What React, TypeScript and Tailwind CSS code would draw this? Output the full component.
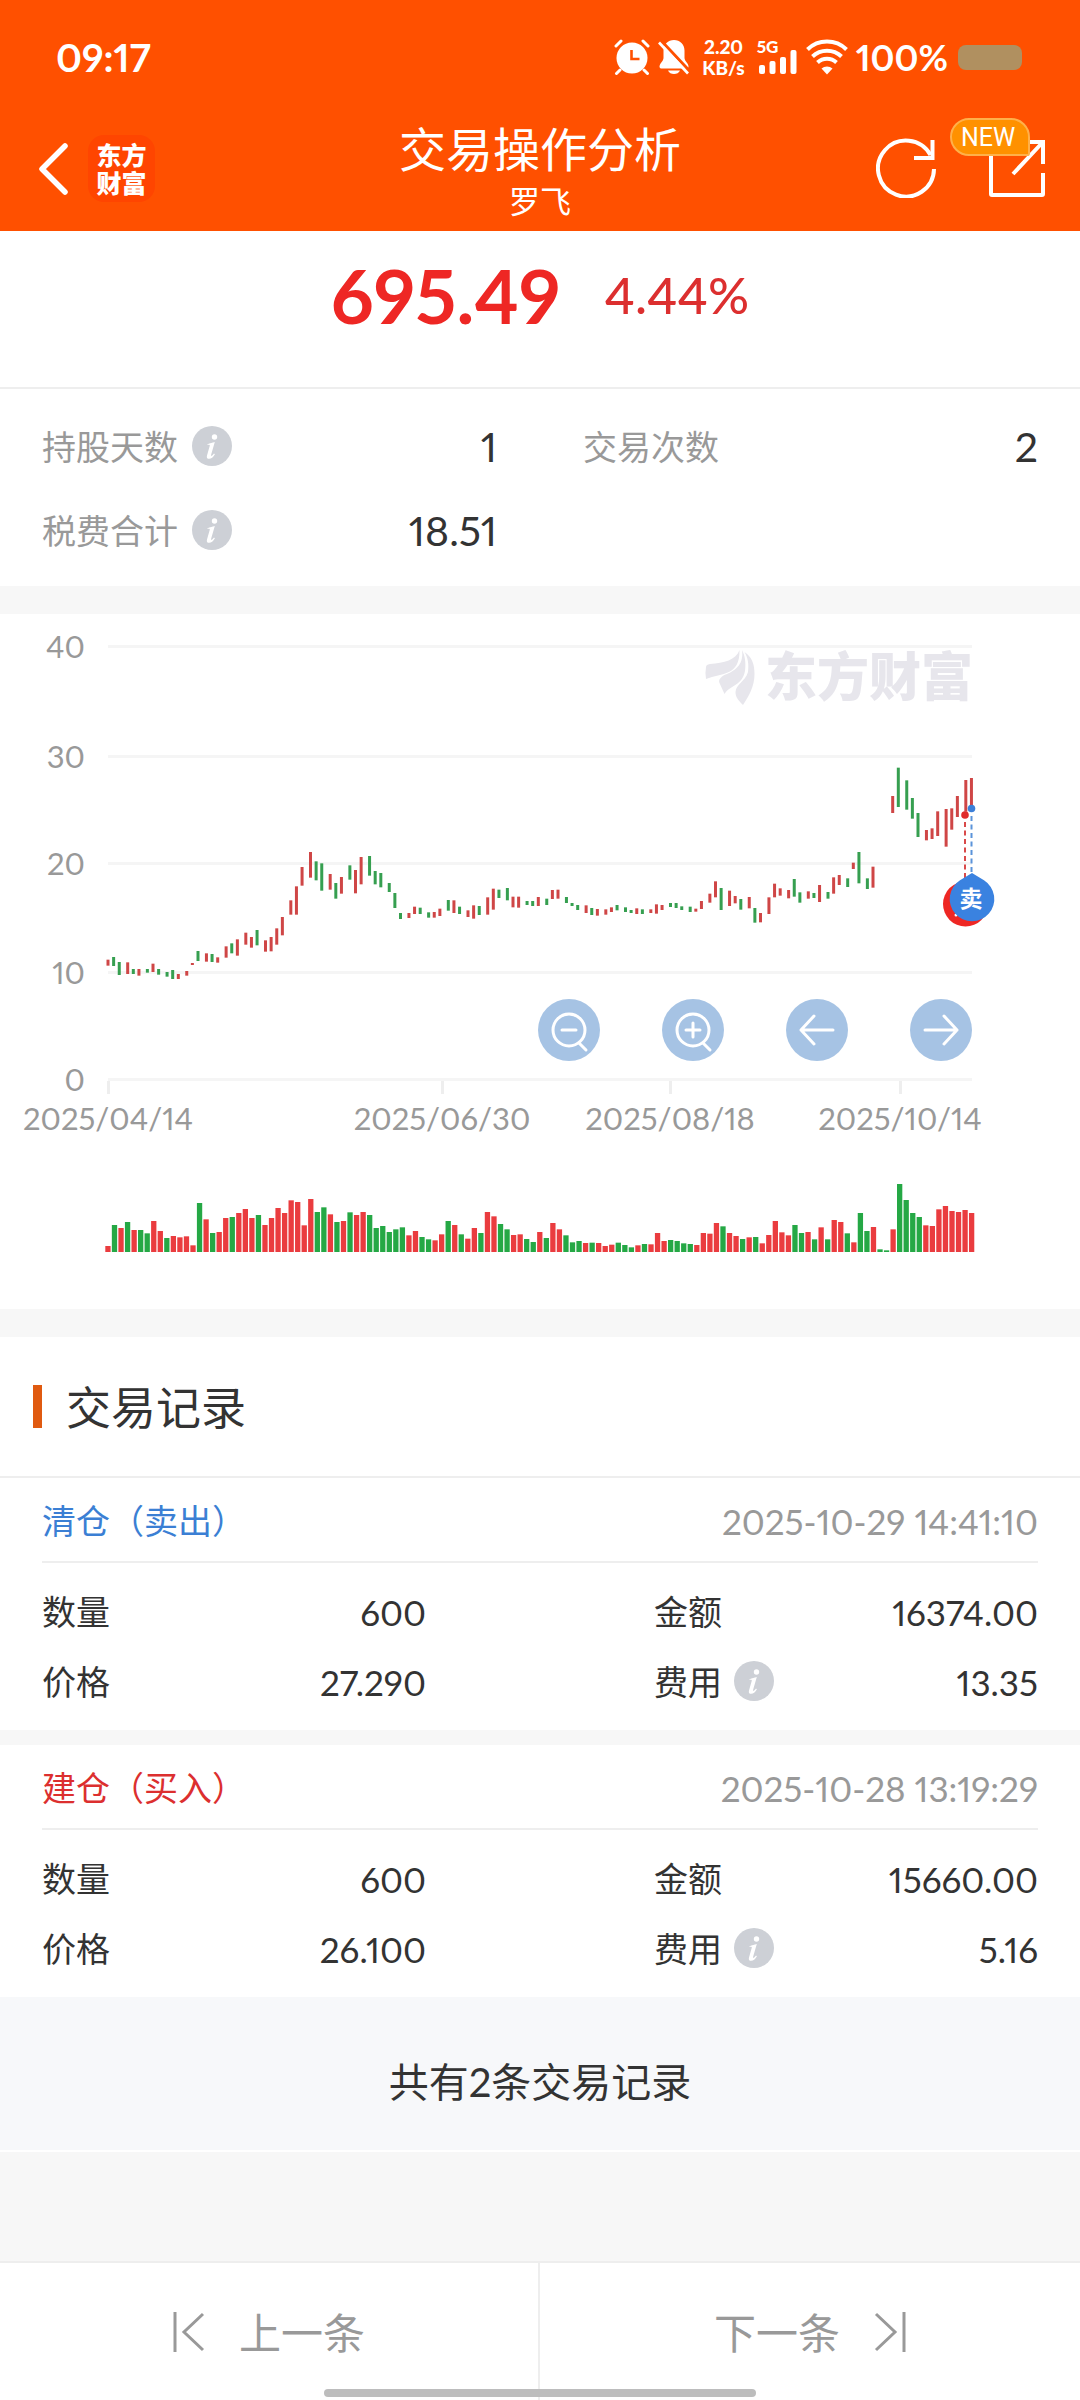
import type { ReactNode } from "react";

// [index, up/down, top, bottom], y in thirds of a chart pixel
type Candle = [number, "r" | "g", number, number];

const candles: Candle[] = [
  [0, "r", 1049, 1067], [1, "g", 1041, 1068], [2, "g", 1056, 1095], [3, "r", 1057, 1092], [4, "g", 1077, 1092],
  [5, "r", 1077, 1097], [6, "g", 1077, 1088], [7, "r", 1061, 1086], [8, "g", 1077, 1094], [9, "g", 1086, 1100],
  [10, "g", 1080, 1107], [11, "r", 1092, 1107], [12, "r", 1083, 1097], [13, "r", 1059, 1065], [14, "g", 1023, 1053],
  [15, "r", 1030, 1055], [16, "g", 1032, 1056], [17, "r", 1042, 1058], [18, "r", 1009, 1043], [19, "g", 1000, 1030],
  [20, "r", 988, 1037], [21, "r", 968, 1004], [22, "r", 981, 1013], [23, "g", 960, 1006], [24, "r", 991, 1025],
  [25, "r", 981, 1024], [26, "r", 955, 1004], [27, "r", 921, 976], [28, "r", 871, 914], [29, "r", 829, 914],
  [30, "r", 771, 827], [31, "r", 726, 803], [32, "g", 754, 811], [33, "g", 760, 842], [34, "r", 792, 839],
  [35, "g", 819, 866], [36, "r", 801, 851], [37, "g", 766, 809], [38, "r", 780, 850], [39, "r", 741, 823],
  [40, "g", 738, 797], [41, "g", 783, 823], [42, "g", 789, 832], [43, "g", 819, 846], [44, "g", 849, 894],
  [45, "g", 909, 927], [46, "r", 909, 924], [47, "r", 890, 912], [48, "g", 893, 912], [49, "g", 907, 923],
  [50, "r", 906, 923], [51, "r", 896, 918], [52, "g", 870, 902], [53, "r", 871, 909], [54, "g", 890, 912],
  [55, "r", 901, 921], [56, "r", 886, 926], [57, "g", 888, 915], [58, "r", 862, 914], [59, "r", 836, 899],
  [60, "g", 839, 864], [61, "g", 834, 871], [62, "r", 860, 892], [63, "r", 860, 893], [64, "g", 873, 885],
  [65, "g", 873, 888], [66, "r", 861, 888], [67, "g", 866, 885], [68, "r", 840, 867], [69, "r", 839, 866],
  [70, "g", 861, 879], [71, "g", 879, 888], [72, "g", 885, 900], [73, "r", 886, 909], [74, "g", 894, 915],
  [75, "r", 897, 917], [76, "r", 898, 914], [77, "r", 892, 906], [78, "g", 885, 901], [79, "g", 892, 906],
  [80, "g", 900, 909], [81, "r", 895, 912], [82, "g", 898, 912], [83, "r", 898, 909], [84, "r", 883, 911],
  [85, "r", 885, 900], [86, "g", 879, 891], [87, "g", 879, 894], [88, "g", 889, 900], [89, "g", 890, 906],
  [90, "r", 896, 905], [91, "r", 873, 897], [92, "r", 851, 878], [93, "r", 814, 862], [94, "g", 834, 900],
  [95, "r", 842, 888], [96, "r", 858, 880], [97, "g", 867, 899], [98, "r", 861, 895], [99, "g", 894, 938],
  [100, "r", 909, 937], [101, "r", 862, 912], [102, "r", 821, 862], [103, "r", 835, 857], [104, "r", 840, 865],
  [105, "g", 807, 860], [106, "g", 847, 878], [107, "r", 844, 866], [108, "g", 849, 864], [109, "r", 825, 876],
  [110, "g", 846, 866], [111, "r", 802, 851], [112, "r", 795, 825], [113, "g", 805, 831], [114, "r", 758, 777],
  [115, "g", 726, 820], [116, "g", 805, 837], [117, "r", 770, 833], [120, "r", 558, 609], [121, "g", 473, 591],
  [122, "g", 511, 599], [123, "g", 564, 626], [124, "g", 609, 681], [125, "r", 660, 691], [126, "r", 655, 687],
  [127, "r", 604, 678], [128, "r", 597, 710], [129, "r", 595, 659], [130, "r", 558, 621], [131, "r", 510, 605],
  [132, "r", 504, 587],
];

const volumes =
  "r18 g81 r72 g90 r66 g66 g56 r93 r63 g42 r48 r44 r47 r20 g147 r98 g57 r60 r102 g105 r117 r129 r102 g111 r81 r102 r132 r117 r155 r150 r80 r159 g120 g134 r113 g90 r93 g119 r111 r120 g111 g72 g78 g60 g68 g74 r50 r63 g45 g38 r35 r53 g93 r81 g53 r40 r72 g57 r120 r107 g84 g68 r51 r53 g39 g30 r60 g42 r87 r68 g50 g29 g33 r27 g28 r27 r18 r22 g28 g21 g14 r20 g24 r23 r57 r33 g36 g33 g26 g24 r21 r57 r55 r87 g77 r57 r48 g39 r44 g45 r26 r51 r93 r59 r50 g81 g57 r60 g38 r74 g38 r96 r90 g56 r29 g117 g63 r75 g8 g5 r68 g204 g156 g117 g105 r80 r78 r128 r138 r123 r120 r126 r117".split(
    " "
  );

const yAxis = [
  { label: "40", y: 32 },
  { label: "30", y: 142 },
  { label: "20", y: 249 },
  { label: "10", y: 358 },
  { label: "0", y: 465 },
];

const xAxis = [
  { label: "2025/04/14", x: 108 },
  { label: "2025/06/30", x: 442 },
  { label: "2025/08/18", x: 670 },
  { label: "2025/10/14", x: 900 },
];

const records = [
  {
    title: "清仓（卖出）",
    color: "text-[#3b7fd4]",
    time: "2025-10-29 14:41:10",
    count: "600",
    amount: "16374.00",
    price: "27.290",
    fee: "13.35",
  },
  {
    title: "建仓（买入）",
    color: "text-[#dc2f2f]",
    time: "2025-10-28 13:19:29",
    count: "600",
    amount: "15660.00",
    price: "26.100",
    fee: "5.16",
  },
];

const candleX = (i: number) => 108 + Math.floor((i * 6.545) / 2.8125 + 0.16) * 2.8125;

function InfoButton({ label }: { label: string }) {
  return (
    <button
      aria-label={label}
      className="flex size-10 items-center justify-center rounded-full bg-[#cdd0d6] text-white"
    >
      <svg viewBox="0 0 40 40" className="size-10" fill="currentColor">
        <circle cx="22.5" cy="11" r="2.7" />
        <path d="M15.5 18.2c2.600-.9 4.900-1.800 7.300-2.200l-3.600 12.600c-.4 1.500.2 1.700 1 1 .7-.6 1.300-1.300 1.800-2l.9.6c-1.700 2.900-3.700 4.600-5.800 4.600-1.900 0-2.700-1.300-2.100-3.400l2.700-9.300c.3-1.100 0-1.400-2.400-1.200z" />
      </svg>
    </button>
  );
}

function StatusBar() {
  return (
    <div className="flex h-[114px] items-center justify-between pr-[58px] pl-14 text-white">
      <span className="text-[39px] leading-none font-bold">09:17</span>
      <div className="flex items-center">
        {/* alarm */}
        <svg viewBox="0 0 36 36" className="mr-2 size-9" fill="none" stroke="currentColor" strokeLinecap="round">
          <circle cx="18" cy="19" r="15.500" fill="currentColor" stroke="none" />
          <path d="M2 7l5-5M34 7l-5-5M6 31l-3.500 3.500M30 31l3.500 3.500" strokeWidth="3" />
          <path d="M17.500 11v9h8" stroke="#ff5000" strokeWidth="2.600" strokeLinecap="butt" />
        </svg>
        {/* muted bell */}
        <svg viewBox="0 0 32 36" className="mr-3 h-9 w-8">
          <path
            d="M16 1c6 0 10.500 4.600 10.500 10.500v7.500c0 3 4 5.500 4 8.500 0 1.500-1 2-2 2h-25c-1 0-2-.5-2-2 0-3 4-5.500 4-8.500v-7.500C5.500 5.600 10 1 16 1z"
            fill="currentColor"
          />
          <path d="M10 31.500h12c-1 2.500-3.400 3.500-6 3.500s-5-1-6-3.500z" fill="currentColor" />
          <path d="M3 1.500l29 31" stroke="#ff5000" strokeWidth="3" />
          <path d="M1 3.500l29 31" stroke="currentColor" strokeWidth="2.600" />
        </svg>
        <div className="mr-3 flex flex-col items-center text-[19px] leading-[21px] font-black">
          <span>2.20</span>
          <span>KB/s</span>
        </div>
        <div className="relative mr-2 h-9 w-[41px]">
          <span className="absolute top-0 left-0 text-[17px] leading-[15px] font-black">5G</span>
          <svg viewBox="0 0 41 36" className="h-9 w-[41px]" fill="currentColor">
            <rect x="2" y="26" width="6" height="9" rx="2" />
            <rect x="12.500" y="22" width="6" height="13" rx="2" />
            <rect x="23" y="18" width="6" height="17" rx="2" />
            <rect x="33.500" y="11" width="6" height="24" rx="2" />
          </svg>
        </div>
        <svg viewBox="0 0 42 36" className="mr-2 h-9 w-[42px]" fill="none" stroke="currentColor" strokeWidth="4">
          <path d="M1.500 10.500a28 28 0 0 1 39 0M6.500 17.500a21 21 0 0 1 29 0M11.500 23.500a14 14 0 0 1 19 0" />
          <path d="M15.500 29.500a8.500 8.500 0 0 1 11 0L21 35.500z" fill="currentColor" stroke="none" />
        </svg>
        <span className="mr-[10px] text-[36px] leading-none font-bold">100%</span>
        <span className="h-[25px] w-16 rounded-lg bg-[#b09060]" />
      </div>
    </div>
  );
}

function Header() {
  return (
    <header className="bg-[#ff5000]">
      <StatusBar />
      <div className="grid h-[117px] grid-cols-[1fr_auto_1fr] text-white">
        <div className="flex items-start gap-5 pt-[21px] pl-[38px]">
          <button aria-label="返回" className="flex h-[68px] items-center">
            <svg viewBox="0 0 30 52" className="h-[52px] w-[30px]" fill="none" stroke="currentColor">
              <path d="M27 3L4 26l23 23" strokeWidth="5.500" strokeLinecap="round" strokeLinejoin="round" />
            </svg>
          </button>
          <div className="flex size-[67px] flex-col items-center justify-center rounded-2xl bg-[#ff4500] text-[25px] leading-[28px] font-black">
            <span>东方</span>
            <span>财富</span>
          </div>
        </div>
        <div className="flex flex-col items-center pt-[9px]">
          <h1 className="text-[47px] leading-[52px]">交易操作分析</h1>
          <p className="mt-2 text-[31px] leading-[36px]">罗飞</p>
        </div>
        <div className="flex items-start justify-end gap-[52px] pt-6 pr-[34px]">
          <button aria-label="刷新">
            <svg viewBox="0 0 60 60" className="size-[60px]" fill="none" stroke="currentColor" strokeWidth="4">
              <path d="M58 31a28 28 0 1 1-3.500-14" />
              <path d="M56.500 2v18H38" />
            </svg>
          </button>
          <button aria-label="分享" className="relative">
            <svg viewBox="0 0 58 60" className="h-[60px] w-[58px]" fill="none" stroke="currentColor" strokeWidth="4">
              <path d="M3 12v44q0 1 1 1h50q1 0 1-1V35" />
              <path d="M36 4h19v22M54 5L25 36" />
            </svg>
            <span className="absolute -top-5 -left-[38px] flex h-[38px] w-[80px] items-center justify-center rounded-[20px] rounded-br-[3px] border-2 border-[#ffb04a] bg-[#ff9100] pr-1 font-[Roboto] text-[25px] leading-none">
              NEW
            </span>
          </button>
        </div>
      </div>
    </header>
  );
}

function Stat({ label, value, info }: { label: string; value: string; info?: boolean }) {
  return (
    <div className="flex h-10 items-center">
      <dt className="flex items-center gap-[14px] text-[34px] leading-10 text-[#999]">
        <span className="pt-[2px]">{label}</span>
        {info && <InfoButton label={label + "说明"} />}
      </dt>
      <dd className="ml-auto pt-[2px] text-[41px] leading-10 text-[#333]">{value}</dd>
    </div>
  );
}

function ChartButton({ label, children }: { label: string; children: ReactNode }) {
  return (
    <button aria-label={label} className="size-[62px] rounded-full bg-[#a6c3e4] text-white">
      <svg
        viewBox="0 0 62 62"
        className="size-[62px]"
        fill="none"
        stroke="currentColor"
        strokeWidth="3"
        strokeLinecap="round"
        strokeLinejoin="round"
      >
        {children}
      </svg>
    </button>
  );
}

function Chart() {
  return (
    <section className="relative bg-white">
      <svg viewBox="0 0 1080 695" className="w-full">
        {yAxis.map((t) => (
          <g key={t.label}>
            <rect x="108" y={t.y - 1} width="864" height="3" fill="#f5f5f5" />
            <text x="85" y={t.y + 12} textAnchor="end" className="fill-[#999] text-[31px]">
              {t.label}
            </text>
          </g>
        ))}
        {xAxis.map((t) => (
          <g key={t.label}>
            <rect x={t.x - 1} y="467" width="3" height="13" fill="#eee" />
            <text x={t.x} y="516" textAnchor="middle" className="fill-[#999] text-[31px]">
              {t.label}
            </text>
          </g>
        ))}

        {/* watermark */}
        <g fill="#e7e6ec">
          <path d="M739.500 36C736 46 724 49 710 50Q706 50.500 706 53 705 58 706 65C722 59 740 62 739.500 36z" />
          <path d="M742 36C744 50 736 56 727 60 721 62 718 66 719.500 69L724.500 80C730 71 742 72 745 57 746 48 745 42 742 36z" />
          <path d="M744.500 38C752 43 754.500 50 754.500 60 754.500 72 749 82 743 91 738 86 735.500 83 735.500 78 736 70 745 68 748 58 749 50 748 44 744.500 38z" />
          <text x="765" y="82" className="text-[52px] font-black">
            东方财富
          </text>
        </g>

        {candles.map(([i, c, top, bottom]) => (
          <rect
            key={i}
            x={candleX(i) - 1.5}
            y={top / 3 - 4}
            width="3"
            height={(bottom - top) / 3}
            fill={c === "r" ? "#cf4646" : "#369f50"}
          />
        ))}
        {volumes.map((v, i) => {
          const h = Number(v.slice(1)) / 3;
          return (
            <rect
              key={i}
              x={105.3 + i * 6.543}
              y={638 - h}
              width="5.3"
              height={h}
              fill={v[0] === "r" ? "#ea3c3f" : "#25a845"}
            />
          );
        })}

        {/* buy / sell markers */}
        <path d="M965 208v56" stroke="#d94a4a" strokeWidth="2" strokeDasharray="5 3.500" />
        <path d="M971.500 202v56" stroke="#5b93da" strokeWidth="2" strokeDasharray="5 3.500" />
        <circle cx="965" cy="201" r="3.800" fill="#e02c2c" />
        <circle cx="971.500" cy="194.500" r="3.800" fill="#3b7fd8" />
        <circle cx="965.500" cy="290" r="22.500" fill="#ee2724" />
        <circle cx="956" cy="301" r="1.500" fill="#fff" />
        <path d="M972 259l12 7.200a22.300 22.300 0 1 1-24 0z" fill="#3a82e0" />
        <text x="971" y="293" textAnchor="middle" className="fill-white text-[23px] font-bold">
          卖
        </text>
      </svg>

      <div className="absolute top-[385px] right-[10%] flex gap-[62px]">
        <ChartButton label="缩小">
          <circle cx="31" cy="31" r="16" />
          <path d="M24 31h14M41 44l7 7" />
        </ChartButton>
        <ChartButton label="放大">
          <circle cx="31" cy="31" r="16" />
          <path d="M24 31h14M31 24v14M41 44l7 7" />
        </ChartButton>
        <ChartButton label="左移">
          <path d="M47 31H15M28 17L15 31l13 14" />
        </ChartButton>
        <ChartButton label="右移">
          <path d="M15 31h32M34 17l13 14-13 14" />
        </ChartButton>
      </div>
    </section>
  );
}

function Field({ label, value, info }: { label: string; value: string; info?: boolean }) {
  return (
    <div className="flex h-10 items-center text-[#333]">
      <dt className="flex items-center gap-3 text-[34px] leading-10">
        <span className="pt-[2px]">{label}</span>
        {info && <InfoButton label={label + "说明"} />}
      </dt>
      <dd className="ml-auto pt-[2px] text-[35px] leading-10">{value}</dd>
    </div>
  );
}

export default function App() {
  return (
    <div className="flex min-h-screen flex-col bg-[#f7f7f7] [font-family:Lato,'Noto_Sans_CJK_SC',sans-serif] proportional-nums">
      <Header />

      <main className="flex flex-1 flex-col">
        <section className="bg-white">
          <div className="flex h-[158px] items-start justify-center gap-11 border-b-2 border-[#eee] pt-6">
            <span className="text-[75px] leading-20 font-bold text-[#ee2724]">695.49</span>
            <span className="text-[51px] leading-20 font-medium text-[#dc2f2f]">4.44%</span>
          </div>
          <dl className="grid grid-cols-2 gap-x-[86px] gap-y-11 px-[42px] pt-[37px] pb-9">
            <Stat label="持股天数" value="1" info />
            <Stat label="交易次数" value="2" />
            <Stat label="税费合计" value="18.51" info />
          </dl>
        </section>

        <div className="h-7" />
        <Chart />
        <div className="h-7" />

        <section>
          <div className="flex h-[141px] items-center gap-6 border-b-2 border-[#eee] bg-white pl-[33px]">
            <span className="h-[43px] w-[9px] bg-[#e05a10]" />
            <h2 className="pt-1 text-[45px] leading-none text-[#333]">交易记录</h2>
          </div>
          <div className="flex flex-col gap-[15px]">
            {records.map((r) => (
              <article key={r.time} className="bg-white px-[42px] pb-[29px]">
                <div className="flex h-[85px] items-center justify-between border-b-2 border-[#eee] pt-[2px]">
                  <h3 className={`text-[34px] leading-10 ${r.color}`}>{r.title}</h3>
                  <time className="text-[35px] leading-10 text-[#999]">{r.time}</time>
                </div>
                <dl className="grid grid-cols-2 gap-x-[228px] gap-y-[30px] pt-7">
                  <Field label="数量" value={r.count} />
                  <Field label="金额" value={r.amount} />
                  <Field label="价格" value={r.price} />
                  <Field label="费用" value={r.fee} info />
                </dl>
              </article>
            ))}
          </div>
        </section>

        <p className="flex h-[155px] items-center justify-center border-b-2 border-white bg-[#f7f8fa] pt-4 text-[40px] leading-none text-[#333]">
          共有2条交易记录
        </p>
      </main>

      <nav className="relative grid h-[139px] grid-cols-2 border-t-2 border-[#eee] bg-white text-[42px] leading-none text-[#999]">
        <button className="flex items-center justify-center gap-[34px] border-r-2 border-[#eee]">
          <svg viewBox="0 0 32 40" className="h-10 w-8" fill="none" stroke="currentColor" strokeWidth="3">
            <path d="M2 0v40M30 2L11 20l19 18" />
          </svg>
          <span className="pt-[2px]">上一条</span>
        </button>
        <button className="flex items-center justify-center gap-[34px]">
          <span className="pt-[2px]">下一条</span>
          <svg viewBox="0 0 32 40" className="h-10 w-8" fill="none" stroke="currentColor" strokeWidth="3">
            <path d="M30 0v40M2 2l19 18L2 38" />
          </svg>
        </button>
        <span className="absolute bottom-[3px] left-1/2 h-2 w-2/5 -translate-x-1/2 rounded-full bg-[#bdbdbd]" />
      </nav>
    </div>
  );
}
